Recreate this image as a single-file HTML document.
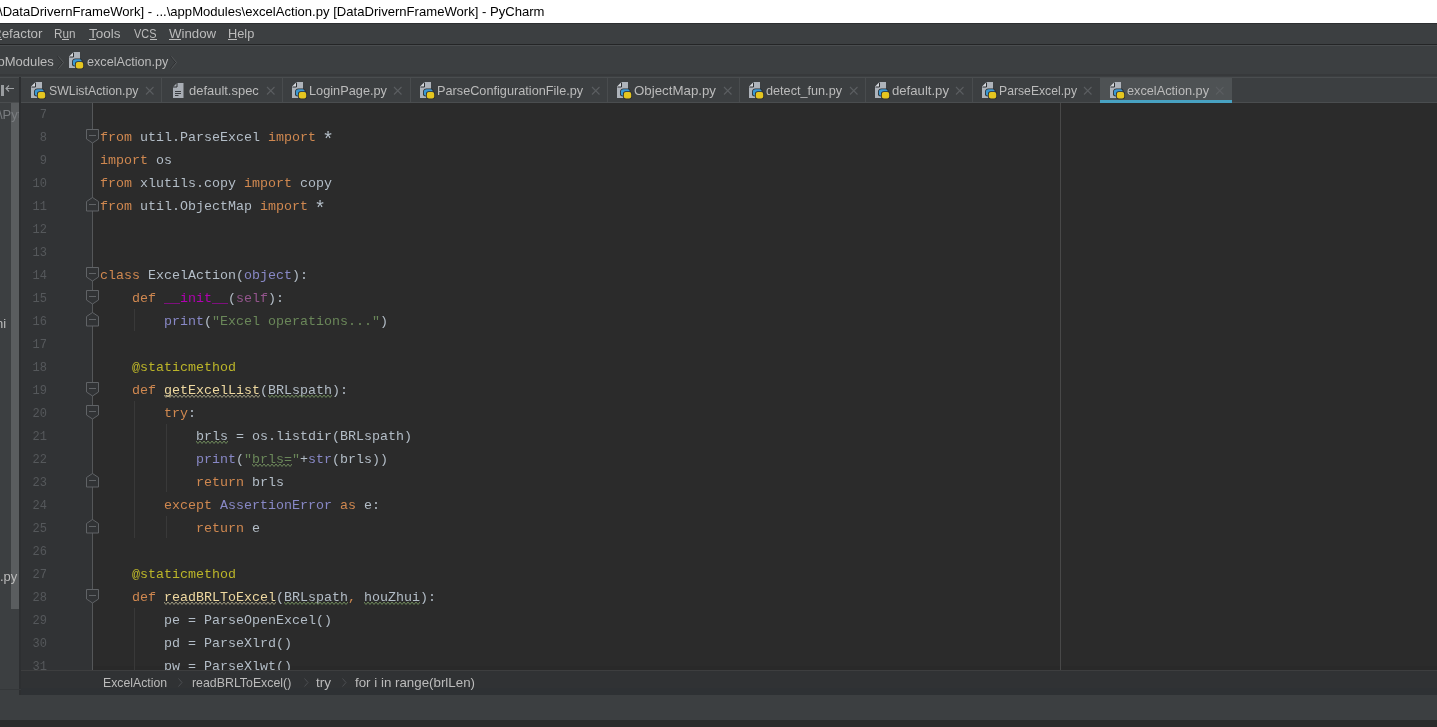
<!DOCTYPE html>
<html><head><meta charset="utf-8"><style>
*{margin:0;padding:0;box-sizing:border-box}
html,body{width:1437px;height:727px;overflow:hidden;background:#2b2b2b;font-family:"Liberation Sans",sans-serif}
.a{position:absolute}
.t{position:absolute;white-space:pre;font-size:13px;line-height:16px;transform-origin:0 0}
.c{position:absolute;white-space:pre;font-family:"Liberation Mono",monospace;font-size:13.333px;line-height:23px;color:#b3bdc7;left:100px}
.ln{position:absolute;white-space:pre;font-family:"Liberation Mono",monospace;font-size:13.333px;line-height:23px;color:#55585b;text-align:right;width:30px;left:16.5px;transform:scaleX(0.9);transform-origin:100% 0}
.k{color:#d08850}.s{color:#6a8759}.b{color:#8888c6}.m{color:#b200b2}.sf{color:#94558d}.d{color:#bbb529}.f{color:#efd9a0}
.ast{display:inline-block;width:8px;transform:translate(0,3px) scale(1.45)}
.w{text-decoration:underline wavy #5f8c4a;text-decoration-thickness:1px;text-underline-offset:3px}
.wy{text-decoration:underline wavy #8f8a3a;text-decoration-thickness:1px;text-underline-offset:3px}
</style></head><body><div style="position:absolute;left:0;top:0;width:1437px;height:727px;will-change:transform">
<div class="a" style="left:0px;top:0px;width:1437px;height:23px;background:#ffffff"></div>
<div class="a" style="left:0px;top:23px;width:1437px;height:21px;background:#3c3f41"></div>
<div class="a" style="left:0px;top:44px;width:1437px;height:1px;background:#242526"></div>
<div class="a" style="left:0px;top:23px;width:1437px;height:1px;background:#2d2f31"></div>
<div class="a" style="left:0px;top:45px;width:1437px;height:1px;background:#4a4d4f"></div>
<div class="a" style="left:0px;top:46px;width:1437px;height:31px;background:#3c3f41"></div>
<div class="a" style="left:0px;top:74px;width:1437px;height:2px;background:#37393b"></div>
<div class="a" style="left:0px;top:77px;width:1437px;height:25px;background:#3c3f41"></div>
<div class="a" style="left:0px;top:77px;width:1437px;height:1px;background:#4a4d4f"></div>
<div class="a" style="left:0px;top:102px;width:1437px;height:1px;background:#4a4d4f"></div>
<div class="a" style="left:0px;top:103px;width:19px;height:567px;background:#3c3f41"></div>
<div class="a" style="left:19px;top:77px;width:2px;height:618px;background:#2d2f31"></div>
<div class="a" style="left:21px;top:103px;width:72px;height:567px;background:#313335"></div>
<div class="a" style="left:92px;top:103px;width:1px;height:567px;background:#555759"></div>
<div class="a" style="left:0px;top:670px;width:19px;height:25px;background:#3c3f41"></div>
<div class="a" style="left:21px;top:670px;width:1416px;height:18px;background:#303234"></div>
<div class="a" style="left:21px;top:670px;width:1416px;height:1px;background:#3d3e3f"></div>
<div class="a" style="left:93px;top:666px;width:1344px;height:4px;background:#292929"></div>
<div class="a" style="left:1060px;top:103px;width:1px;height:567px;background:#484848"></div>
<div class="a" style="left:21px;top:688px;width:1416px;height:7px;background:#2e3134"></div>
<div class="a" style="left:0px;top:689px;width:21px;height:1px;background:#35383a"></div>
<div class="a" style="left:0px;top:695px;width:1437px;height:25px;background:#3c3f41"></div>
<div class="a" style="left:0px;top:720px;width:1437px;height:7px;background:#2b2b2b"></div>
<div class="a" style="left:1100px;top:78px;width:132px;height:22px;background:#4e5254"></div>
<div class="a" style="left:1100px;top:100px;width:132px;height:3px;background:#48a2c2"></div>
<div class="a" style="left:161px;top:78px;width:1px;height:24px;background:#494c4e"></div>
<div class="a" style="left:282px;top:78px;width:1px;height:24px;background:#494c4e"></div>
<div class="a" style="left:410px;top:78px;width:1px;height:24px;background:#494c4e"></div>
<div class="a" style="left:607px;top:78px;width:1px;height:24px;background:#494c4e"></div>
<div class="a" style="left:739px;top:78px;width:1px;height:24px;background:#494c4e"></div>
<div class="a" style="left:865px;top:78px;width:1px;height:24px;background:#494c4e"></div>
<div class="a" style="left:972px;top:78px;width:1px;height:24px;background:#494c4e"></div>
<div class="t" style="left:-1px;top:4.0px;color:#000000;transform:scaleX(1.0063)">\DataDrivernFrameWork] - ...\appModules\excelAction.py [DataDrivernFrameWork] - PyCharm</div>
<div class="t" style="left:-8.5px;top:25.700000000000003px;color:#bbbbbb;transform:scaleX(1.0279)">Refactor</div>
<div class="t" style="left:54px;top:25.700000000000003px;color:#bbbbbb;transform:scaleX(0.9015)">Run</div>
<div class="t" style="left:89px;top:25.700000000000003px;color:#bbbbbb;transform:scaleX(1.0380)">Tools</div>
<div class="t" style="left:134.3px;top:25.700000000000003px;color:#bbbbbb;transform:scaleX(0.8380)">VCS</div>
<div class="t" style="left:168.9px;top:25.700000000000003px;color:#bbbbbb;transform:scaleX(1.0208)">Window</div>
<div class="t" style="left:228.3px;top:25.700000000000003px;color:#bbbbbb;transform:scaleX(0.9837)">Help</div>
<div class="t" style="left:-17px;top:54.3px;color:#bbbbbb;transform:scaleX(0.9996)">appModules</div>
<div class="t" style="left:86.6px;top:54.3px;color:#bbbbbb;transform:scaleX(0.9711)">excelAction.py</div>
<div class="t" style="left:49px;top:83.0px;color:#bbbbbb;transform:scaleX(0.9457)">SWListAction.py</div>
<div class="t" style="left:189px;top:83.0px;color:#bbbbbb;transform:scaleX(0.9957)">default.spec</div>
<div class="t" style="left:309px;top:83.0px;color:#bbbbbb;transform:scaleX(0.9810)">LoginPage.py</div>
<div class="t" style="left:437.4px;top:83.0px;color:#bbbbbb;transform:scaleX(0.9774)">ParseConfigurationFile.py</div>
<div class="t" style="left:634px;top:83.0px;color:#bbbbbb;transform:scaleX(1.0224)">ObjectMap.py</div>
<div class="t" style="left:766px;top:83.0px;color:#bbbbbb;transform:scaleX(0.9736)">detect_fun.py</div>
<div class="t" style="left:892px;top:83.0px;color:#bbbbbb;transform:scaleX(1.0111)">default.py</div>
<div class="t" style="left:999px;top:83.0px;color:#bbbbbb;transform:scaleX(0.9387)">ParseExcel.py</div>
<div class="t" style="left:1127px;top:83.0px;color:#bbbbbb;transform:scaleX(0.9783)">excelAction.py</div>
<div class="t" style="left:102.5px;top:675.0px;color:#bbbbbb;transform:scaleX(0.9438)">ExcelAction</div>
<div class="t" style="left:191.7px;top:675.0px;color:#bbbbbb;transform:scaleX(0.9501)">readBRLToExcel()</div>
<div class="t" style="left:316px;top:675.0px;color:#bbbbbb;transform:scaleX(1.0387)">try</div>
<div class="t" style="left:355px;top:675.0px;color:#bbbbbb;transform:scaleX(1.0251)">for i in range(brlLen)</div>
<div class="a" style="left:0;top:103px;width:1437px;height:567px;overflow:hidden"><div class="a" style="left:0;top:-103px;width:1437px;height:727px"><div class="ln" style="top:102.94px">7</div>
<div class="ln" style="top:125.94px">8</div>
<div class="c" style="top:125.94px"><span class="k">from</span> util.ParseExcel <span class="k">import</span> <span class="ast">*</span></div>
<div class="ln" style="top:148.94px">9</div>
<div class="c" style="top:148.94px"><span class="k">import</span> os</div>
<div class="ln" style="top:171.94px">10</div>
<div class="c" style="top:171.94px"><span class="k">from</span> xlutils.copy <span class="k">import</span> copy</div>
<div class="ln" style="top:194.94px">11</div>
<div class="c" style="top:194.94px"><span class="k">from</span> util.ObjectMap <span class="k">import</span> <span class="ast">*</span></div>
<div class="ln" style="top:217.94px">12</div>
<div class="ln" style="top:240.94px">13</div>
<div class="ln" style="top:263.94px">14</div>
<div class="c" style="top:263.94px"><span class="k">class</span> ExcelAction(<span class="b">object</span>):</div>
<div class="ln" style="top:286.94px">15</div>
<div class="c" style="top:286.94px">    <span class="k">def</span> <span class="m">__init__</span>(<span class="sf">self</span>):</div>
<div class="ln" style="top:309.94px">16</div>
<div class="c" style="top:309.94px">        <span class="b">print</span>(<span class="s">"Excel operations..."</span>)</div>
<div class="ln" style="top:332.94px">17</div>
<div class="ln" style="top:355.94px">18</div>
<div class="c" style="top:355.94px">    <span class="d">@staticmethod</span></div>
<div class="ln" style="top:378.94px">19</div>
<div class="c" style="top:378.94px">    <span class="k">def</span> <span class="f">getExcelList</span>(BRLspath):</div>
<div class="ln" style="top:401.94px">20</div>
<div class="c" style="top:401.94px">        <span class="k">try</span>:</div>
<div class="ln" style="top:424.94px">21</div>
<div class="c" style="top:424.94px">            brls = os.listdir(BRLspath)</div>
<div class="ln" style="top:447.94px">22</div>
<div class="c" style="top:447.94px">            <span class="b">print</span>(<span class="s">"brls="</span>+<span class="b">str</span>(brls))</div>
<div class="ln" style="top:470.94px">23</div>
<div class="c" style="top:470.94px">            <span class="k">return</span> brls</div>
<div class="ln" style="top:493.94px">24</div>
<div class="c" style="top:493.94px">        <span class="k">except</span> <span class="b">AssertionError</span> <span class="k">as</span> e:</div>
<div class="ln" style="top:516.94px">25</div>
<div class="c" style="top:516.94px">            <span class="k">return</span> e</div>
<div class="ln" style="top:539.94px">26</div>
<div class="ln" style="top:562.94px">27</div>
<div class="c" style="top:562.94px">    <span class="d">@staticmethod</span></div>
<div class="ln" style="top:585.94px">28</div>
<div class="c" style="top:585.94px">    <span class="k">def</span> <span class="f">readBRLToExcel</span>(BRLspath<span class="k">,</span> houZhui):</div>
<div class="ln" style="top:608.94px">29</div>
<div class="c" style="top:608.94px">        pe = ParseOpenExcel()</div>
<div class="ln" style="top:631.94px">30</div>
<div class="c" style="top:631.94px">        pd = ParseXlrd()</div>
<div class="ln" style="top:654.94px">31</div>
<div class="c" style="top:654.94px">        pw = ParseXlwt()</div>
<svg class="a" style="left:164px;top:394px" width="96" height="5" viewBox="0 0 96 5"><polyline points="0,1 2,3.5 4,1 6,3.5 8,1 10,3.5 12,1 14,3.5 16,1 18,3.5 20,1 22,3.5 24,1 26,3.5 28,1 30,3.5 32,1 34,3.5 36,1 38,3.5 40,1 42,3.5 44,1 46,3.5 48,1 50,3.5 52,1 54,3.5 56,1 58,3.5 60,1 62,3.5 64,1 66,3.5 68,1 70,3.5 72,1 74,3.5 76,1 78,3.5 80,1 82,3.5 84,1 86,3.5 88,1 90,3.5 92,1 94,3.5 96,1" fill="none" stroke="#a09c80" stroke-width="1"/></svg>
<svg class="a" style="left:268px;top:394px" width="64" height="5" viewBox="0 0 64 5"><polyline points="0,1 2,3.5 4,1 6,3.5 8,1 10,3.5 12,1 14,3.5 16,1 18,3.5 20,1 22,3.5 24,1 26,3.5 28,1 30,3.5 32,1 34,3.5 36,1 38,3.5 40,1 42,3.5 44,1 46,3.5 48,1 50,3.5 52,1 54,3.5 56,1 58,3.5 60,1 62,3.5 64,1" fill="none" stroke="#6f8a5c" stroke-width="1"/></svg>
<svg class="a" style="left:196px;top:440px" width="32" height="5" viewBox="0 0 32 5"><polyline points="0,1 2,3.5 4,1 6,3.5 8,1 10,3.5 12,1 14,3.5 16,1 18,3.5 20,1 22,3.5 24,1 26,3.5 28,1 30,3.5 32,1" fill="none" stroke="#6f8a5c" stroke-width="1"/></svg>
<svg class="a" style="left:252px;top:463px" width="40" height="5" viewBox="0 0 40 5"><polyline points="0,1 2,3.5 4,1 6,3.5 8,1 10,3.5 12,1 14,3.5 16,1 18,3.5 20,1 22,3.5 24,1 26,3.5 28,1 30,3.5 32,1 34,3.5 36,1 38,3.5 40,1" fill="none" stroke="#6f8a5c" stroke-width="1"/></svg>
<svg class="a" style="left:164px;top:601px" width="112" height="5" viewBox="0 0 112 5"><polyline points="0,1 2,3.5 4,1 6,3.5 8,1 10,3.5 12,1 14,3.5 16,1 18,3.5 20,1 22,3.5 24,1 26,3.5 28,1 30,3.5 32,1 34,3.5 36,1 38,3.5 40,1 42,3.5 44,1 46,3.5 48,1 50,3.5 52,1 54,3.5 56,1 58,3.5 60,1 62,3.5 64,1 66,3.5 68,1 70,3.5 72,1 74,3.5 76,1 78,3.5 80,1 82,3.5 84,1 86,3.5 88,1 90,3.5 92,1 94,3.5 96,1 98,3.5 100,1 102,3.5 104,1 106,3.5 108,1 110,3.5 112,1" fill="none" stroke="#a09c80" stroke-width="1"/></svg>
<svg class="a" style="left:284px;top:601px" width="64" height="5" viewBox="0 0 64 5"><polyline points="0,1 2,3.5 4,1 6,3.5 8,1 10,3.5 12,1 14,3.5 16,1 18,3.5 20,1 22,3.5 24,1 26,3.5 28,1 30,3.5 32,1 34,3.5 36,1 38,3.5 40,1 42,3.5 44,1 46,3.5 48,1 50,3.5 52,1 54,3.5 56,1 58,3.5 60,1 62,3.5 64,1" fill="none" stroke="#6f8a5c" stroke-width="1"/></svg>
<svg class="a" style="left:364px;top:601px" width="56" height="5" viewBox="0 0 56 5"><polyline points="0,1 2,3.5 4,1 6,3.5 8,1 10,3.5 12,1 14,3.5 16,1 18,3.5 20,1 22,3.5 24,1 26,3.5 28,1 30,3.5 32,1 34,3.5 36,1 38,3.5 40,1 42,3.5 44,1 46,3.5 48,1 50,3.5 52,1 54,3.5 56,1" fill="none" stroke="#6f8a5c" stroke-width="1"/></svg></div></div>
<svg class="a" style="left:31px;top:82px" width="16" height="18" viewBox="0 0 16 18"><path d="M0 4.5 L4.5 0 H11 V16 H0 Z" fill="#aeb3ba"/><path d="M0 5 L4.5 0.5 V5 Z" fill="#d5d8dc"/><path d="M0.5 5 H4.5 V0.5" fill="none" stroke="#2c2e30" stroke-width="1"/><path d="M3 10 Q3 6.5 6.5 6.5 H11 Q13.5 6.5 13.5 9 V11.5 Q13.5 14.5 10.5 14.5 H6 Q3 14.5 3 12 Z" fill="#2b2d2f"/><path d="M3.8 10 Q3.8 7.3 6.5 7.3 H10.5 Q12.7 7.3 12.7 9.3 V11 Q12.7 13.7 10 13.7 H6 Q3.8 13.7 3.8 11.5 Z" fill="#3c98d2"/><path d="M6 12 Q6 9.2 8.8 9.2 H12.5 Q15 9.2 15 11.7 V14.5 Q15 17.2 12.3 17.2 H8.8 Q6 17.2 6 14.5 Z" fill="#2b2d2f"/><path d="M6.8 12 Q6.8 10 8.8 10 H12.3 Q14.2 10 14.2 11.9 V14.4 Q14.2 16.4 12.2 16.4 H9 Q6.8 16.4 6.8 14.4 Z" fill="#e5c620"/></svg><svg class="a" style="left:292px;top:82px" width="16" height="18" viewBox="0 0 16 18"><path d="M0 4.5 L4.5 0 H11 V16 H0 Z" fill="#aeb3ba"/><path d="M0 5 L4.5 0.5 V5 Z" fill="#d5d8dc"/><path d="M0.5 5 H4.5 V0.5" fill="none" stroke="#2c2e30" stroke-width="1"/><path d="M3 10 Q3 6.5 6.5 6.5 H11 Q13.5 6.5 13.5 9 V11.5 Q13.5 14.5 10.5 14.5 H6 Q3 14.5 3 12 Z" fill="#2b2d2f"/><path d="M3.8 10 Q3.8 7.3 6.5 7.3 H10.5 Q12.7 7.3 12.7 9.3 V11 Q12.7 13.7 10 13.7 H6 Q3.8 13.7 3.8 11.5 Z" fill="#3c98d2"/><path d="M6 12 Q6 9.2 8.8 9.2 H12.5 Q15 9.2 15 11.7 V14.5 Q15 17.2 12.3 17.2 H8.8 Q6 17.2 6 14.5 Z" fill="#2b2d2f"/><path d="M6.8 12 Q6.8 10 8.8 10 H12.3 Q14.2 10 14.2 11.9 V14.4 Q14.2 16.4 12.2 16.4 H9 Q6.8 16.4 6.8 14.4 Z" fill="#e5c620"/></svg><svg class="a" style="left:420px;top:82px" width="16" height="18" viewBox="0 0 16 18"><path d="M0 4.5 L4.5 0 H11 V16 H0 Z" fill="#aeb3ba"/><path d="M0 5 L4.5 0.5 V5 Z" fill="#d5d8dc"/><path d="M0.5 5 H4.5 V0.5" fill="none" stroke="#2c2e30" stroke-width="1"/><path d="M3 10 Q3 6.5 6.5 6.5 H11 Q13.5 6.5 13.5 9 V11.5 Q13.5 14.5 10.5 14.5 H6 Q3 14.5 3 12 Z" fill="#2b2d2f"/><path d="M3.8 10 Q3.8 7.3 6.5 7.3 H10.5 Q12.7 7.3 12.7 9.3 V11 Q12.7 13.7 10 13.7 H6 Q3.8 13.7 3.8 11.5 Z" fill="#3c98d2"/><path d="M6 12 Q6 9.2 8.8 9.2 H12.5 Q15 9.2 15 11.7 V14.5 Q15 17.2 12.3 17.2 H8.8 Q6 17.2 6 14.5 Z" fill="#2b2d2f"/><path d="M6.8 12 Q6.8 10 8.8 10 H12.3 Q14.2 10 14.2 11.9 V14.4 Q14.2 16.4 12.2 16.4 H9 Q6.8 16.4 6.8 14.4 Z" fill="#e5c620"/></svg><svg class="a" style="left:617px;top:82px" width="16" height="18" viewBox="0 0 16 18"><path d="M0 4.5 L4.5 0 H11 V16 H0 Z" fill="#aeb3ba"/><path d="M0 5 L4.5 0.5 V5 Z" fill="#d5d8dc"/><path d="M0.5 5 H4.5 V0.5" fill="none" stroke="#2c2e30" stroke-width="1"/><path d="M3 10 Q3 6.5 6.5 6.5 H11 Q13.5 6.5 13.5 9 V11.5 Q13.5 14.5 10.5 14.5 H6 Q3 14.5 3 12 Z" fill="#2b2d2f"/><path d="M3.8 10 Q3.8 7.3 6.5 7.3 H10.5 Q12.7 7.3 12.7 9.3 V11 Q12.7 13.7 10 13.7 H6 Q3.8 13.7 3.8 11.5 Z" fill="#3c98d2"/><path d="M6 12 Q6 9.2 8.8 9.2 H12.5 Q15 9.2 15 11.7 V14.5 Q15 17.2 12.3 17.2 H8.8 Q6 17.2 6 14.5 Z" fill="#2b2d2f"/><path d="M6.8 12 Q6.8 10 8.8 10 H12.3 Q14.2 10 14.2 11.9 V14.4 Q14.2 16.4 12.2 16.4 H9 Q6.8 16.4 6.8 14.4 Z" fill="#e5c620"/></svg><svg class="a" style="left:749px;top:82px" width="16" height="18" viewBox="0 0 16 18"><path d="M0 4.5 L4.5 0 H11 V16 H0 Z" fill="#aeb3ba"/><path d="M0 5 L4.5 0.5 V5 Z" fill="#d5d8dc"/><path d="M0.5 5 H4.5 V0.5" fill="none" stroke="#2c2e30" stroke-width="1"/><path d="M3 10 Q3 6.5 6.5 6.5 H11 Q13.5 6.5 13.5 9 V11.5 Q13.5 14.5 10.5 14.5 H6 Q3 14.5 3 12 Z" fill="#2b2d2f"/><path d="M3.8 10 Q3.8 7.3 6.5 7.3 H10.5 Q12.7 7.3 12.7 9.3 V11 Q12.7 13.7 10 13.7 H6 Q3.8 13.7 3.8 11.5 Z" fill="#3c98d2"/><path d="M6 12 Q6 9.2 8.8 9.2 H12.5 Q15 9.2 15 11.7 V14.5 Q15 17.2 12.3 17.2 H8.8 Q6 17.2 6 14.5 Z" fill="#2b2d2f"/><path d="M6.8 12 Q6.8 10 8.8 10 H12.3 Q14.2 10 14.2 11.9 V14.4 Q14.2 16.4 12.2 16.4 H9 Q6.8 16.4 6.8 14.4 Z" fill="#e5c620"/></svg><svg class="a" style="left:875px;top:82px" width="16" height="18" viewBox="0 0 16 18"><path d="M0 4.5 L4.5 0 H11 V16 H0 Z" fill="#aeb3ba"/><path d="M0 5 L4.5 0.5 V5 Z" fill="#d5d8dc"/><path d="M0.5 5 H4.5 V0.5" fill="none" stroke="#2c2e30" stroke-width="1"/><path d="M3 10 Q3 6.5 6.5 6.5 H11 Q13.5 6.5 13.5 9 V11.5 Q13.5 14.5 10.5 14.5 H6 Q3 14.5 3 12 Z" fill="#2b2d2f"/><path d="M3.8 10 Q3.8 7.3 6.5 7.3 H10.5 Q12.7 7.3 12.7 9.3 V11 Q12.7 13.7 10 13.7 H6 Q3.8 13.7 3.8 11.5 Z" fill="#3c98d2"/><path d="M6 12 Q6 9.2 8.8 9.2 H12.5 Q15 9.2 15 11.7 V14.5 Q15 17.2 12.3 17.2 H8.8 Q6 17.2 6 14.5 Z" fill="#2b2d2f"/><path d="M6.8 12 Q6.8 10 8.8 10 H12.3 Q14.2 10 14.2 11.9 V14.4 Q14.2 16.4 12.2 16.4 H9 Q6.8 16.4 6.8 14.4 Z" fill="#e5c620"/></svg><svg class="a" style="left:982px;top:82px" width="16" height="18" viewBox="0 0 16 18"><path d="M0 4.5 L4.5 0 H11 V16 H0 Z" fill="#aeb3ba"/><path d="M0 5 L4.5 0.5 V5 Z" fill="#d5d8dc"/><path d="M0.5 5 H4.5 V0.5" fill="none" stroke="#2c2e30" stroke-width="1"/><path d="M3 10 Q3 6.5 6.5 6.5 H11 Q13.5 6.5 13.5 9 V11.5 Q13.5 14.5 10.5 14.5 H6 Q3 14.5 3 12 Z" fill="#2b2d2f"/><path d="M3.8 10 Q3.8 7.3 6.5 7.3 H10.5 Q12.7 7.3 12.7 9.3 V11 Q12.7 13.7 10 13.7 H6 Q3.8 13.7 3.8 11.5 Z" fill="#3c98d2"/><path d="M6 12 Q6 9.2 8.8 9.2 H12.5 Q15 9.2 15 11.7 V14.5 Q15 17.2 12.3 17.2 H8.8 Q6 17.2 6 14.5 Z" fill="#2b2d2f"/><path d="M6.8 12 Q6.8 10 8.8 10 H12.3 Q14.2 10 14.2 11.9 V14.4 Q14.2 16.4 12.2 16.4 H9 Q6.8 16.4 6.8 14.4 Z" fill="#e5c620"/></svg><svg class="a" style="left:1110px;top:82px" width="16" height="18" viewBox="0 0 16 18"><path d="M0 4.5 L4.5 0 H11 V16 H0 Z" fill="#aeb3ba"/><path d="M0 5 L4.5 0.5 V5 Z" fill="#d5d8dc"/><path d="M0.5 5 H4.5 V0.5" fill="none" stroke="#2c2e30" stroke-width="1"/><path d="M3 10 Q3 6.5 6.5 6.5 H11 Q13.5 6.5 13.5 9 V11.5 Q13.5 14.5 10.5 14.5 H6 Q3 14.5 3 12 Z" fill="#2b2d2f"/><path d="M3.8 10 Q3.8 7.3 6.5 7.3 H10.5 Q12.7 7.3 12.7 9.3 V11 Q12.7 13.7 10 13.7 H6 Q3.8 13.7 3.8 11.5 Z" fill="#3c98d2"/><path d="M6 12 Q6 9.2 8.8 9.2 H12.5 Q15 9.2 15 11.7 V14.5 Q15 17.2 12.3 17.2 H8.8 Q6 17.2 6 14.5 Z" fill="#2b2d2f"/><path d="M6.8 12 Q6.8 10 8.8 10 H12.3 Q14.2 10 14.2 11.9 V14.4 Q14.2 16.4 12.2 16.4 H9 Q6.8 16.4 6.8 14.4 Z" fill="#e5c620"/></svg><svg class="a" style="left:173px;top:83px" width="12" height="16" viewBox="0 0 12 16"><path d="M0 4 L4 0 H10.5 V15 H0 Z" fill="#a8adb4"/><path d="M0 4 H4 V0" fill="none" stroke="#2f3133" stroke-width="1"/><path d="M2 8.5 H8 M2 10.5 H8 M2 12.5 H5.5" stroke="#3a3d40" stroke-width="1"/></svg><svg class="a" style="left:145px;top:86px" width="10" height="10" viewBox="0 0 10 10"><path d="M1 1 L8.5 8.5 M8.5 1 L1 8.5" stroke="#5b5e61" stroke-width="1.1"/></svg><svg class="a" style="left:266px;top:86px" width="10" height="10" viewBox="0 0 10 10"><path d="M1 1 L8.5 8.5 M8.5 1 L1 8.5" stroke="#5b5e61" stroke-width="1.1"/></svg><svg class="a" style="left:393px;top:86px" width="10" height="10" viewBox="0 0 10 10"><path d="M1 1 L8.5 8.5 M8.5 1 L1 8.5" stroke="#5b5e61" stroke-width="1.1"/></svg><svg class="a" style="left:591px;top:86px" width="10" height="10" viewBox="0 0 10 10"><path d="M1 1 L8.5 8.5 M8.5 1 L1 8.5" stroke="#5b5e61" stroke-width="1.1"/></svg><svg class="a" style="left:723px;top:86px" width="10" height="10" viewBox="0 0 10 10"><path d="M1 1 L8.5 8.5 M8.5 1 L1 8.5" stroke="#5b5e61" stroke-width="1.1"/></svg><svg class="a" style="left:849px;top:86px" width="10" height="10" viewBox="0 0 10 10"><path d="M1 1 L8.5 8.5 M8.5 1 L1 8.5" stroke="#5b5e61" stroke-width="1.1"/></svg><svg class="a" style="left:955px;top:86px" width="10" height="10" viewBox="0 0 10 10"><path d="M1 1 L8.5 8.5 M8.5 1 L1 8.5" stroke="#5b5e61" stroke-width="1.1"/></svg><svg class="a" style="left:1083px;top:86px" width="10" height="10" viewBox="0 0 10 10"><path d="M1 1 L8.5 8.5 M8.5 1 L1 8.5" stroke="#5b5e61" stroke-width="1.1"/></svg><svg class="a" style="left:1215px;top:86px" width="10" height="10" viewBox="0 0 10 10"><path d="M1 1 L8.5 8.5 M8.5 1 L1 8.5" stroke="#5b5e61" stroke-width="1.1"/></svg><svg class="a" style="left:69px;top:52px" width="16" height="18" viewBox="0 0 16 18"><path d="M0 4.5 L4.5 0 H11 V16 H0 Z" fill="#aeb3ba"/><path d="M0 5 L4.5 0.5 V5 Z" fill="#d5d8dc"/><path d="M0.5 5 H4.5 V0.5" fill="none" stroke="#2c2e30" stroke-width="1"/><path d="M3 10 Q3 6.5 6.5 6.5 H11 Q13.5 6.5 13.5 9 V11.5 Q13.5 14.5 10.5 14.5 H6 Q3 14.5 3 12 Z" fill="#2b2d2f"/><path d="M3.8 10 Q3.8 7.3 6.5 7.3 H10.5 Q12.7 7.3 12.7 9.3 V11 Q12.7 13.7 10 13.7 H6 Q3.8 13.7 3.8 11.5 Z" fill="#3c98d2"/><path d="M6 12 Q6 9.2 8.8 9.2 H12.5 Q15 9.2 15 11.7 V14.5 Q15 17.2 12.3 17.2 H8.8 Q6 17.2 6 14.5 Z" fill="#2b2d2f"/><path d="M6.8 12 Q6.8 10 8.8 10 H12.3 Q14.2 10 14.2 11.9 V14.4 Q14.2 16.4 12.2 16.4 H9 Q6.8 16.4 6.8 14.4 Z" fill="#e5c620"/></svg><svg class="a" style="left:56.5px;top:56px" width="8" height="13" viewBox="0 0 8 13"><path d="M0.5 0.5 L5.5 6.5 L0.5 12.5" stroke="#2c2e30" fill="none" stroke-width="1"/><path d="M1.5 0.5 L6.5 6.5 L1.5 12.5" stroke="#55585a" fill="none" stroke-width="1"/></svg><svg class="a" style="left:170px;top:56px" width="8" height="13" viewBox="0 0 8 13"><path d="M0.5 0.5 L5.5 6.5 L0.5 12.5" stroke="#2c2e30" fill="none" stroke-width="1"/><path d="M1.5 0.5 L6.5 6.5 L1.5 12.5" stroke="#55585a" fill="none" stroke-width="1"/></svg><svg class="a" style="left:178px;top:678px" width="5" height="9" viewBox="0 0 5 9"><path d="M0.5 0.5 L4 4.5 L0.5 8.5" stroke="#4b4e51" fill="none"/></svg><svg class="a" style="left:304px;top:678px" width="5" height="9" viewBox="0 0 5 9"><path d="M0.5 0.5 L4 4.5 L0.5 8.5" stroke="#4b4e51" fill="none"/></svg><svg class="a" style="left:342px;top:678px" width="5" height="9" viewBox="0 0 5 9"><path d="M0.5 0.5 L4 4.5 L0.5 8.5" stroke="#4b4e51" fill="none"/></svg><div class="a" style="left:1px;top:85px;width:3px;height:11px;background:#9a9da0"></div><svg class="a" style="left:5px;top:85px" width="10" height="8" viewBox="0 0 10 8"><path d="M9 3.5 H1 M4 0.5 L1 3.5 L4 6.5" stroke="#a0a3a6" fill="none" stroke-width="1.1"/></svg><svg class="a" style="left:85px;top:128px" width="15" height="17" viewBox="0 0 15 17"><path d="M1.5 1.5 H13.5 V11 L7.5 15 L1.5 11 Z" fill="#313335" stroke="#606366" stroke-width="1"/><path d="M4 7.5 H11" stroke="#606366"/></svg><svg class="a" style="left:85px;top:266px" width="15" height="17" viewBox="0 0 15 17"><path d="M1.5 1.5 H13.5 V11 L7.5 15 L1.5 11 Z" fill="#313335" stroke="#606366" stroke-width="1"/><path d="M4 7.5 H11" stroke="#606366"/></svg><svg class="a" style="left:85px;top:289px" width="15" height="17" viewBox="0 0 15 17"><path d="M1.5 1.5 H13.5 V11 L7.5 15 L1.5 11 Z" fill="#313335" stroke="#606366" stroke-width="1"/><path d="M4 7.5 H11" stroke="#606366"/></svg><svg class="a" style="left:85px;top:381px" width="15" height="17" viewBox="0 0 15 17"><path d="M1.5 1.5 H13.5 V11 L7.5 15 L1.5 11 Z" fill="#313335" stroke="#606366" stroke-width="1"/><path d="M4 7.5 H11" stroke="#606366"/></svg><svg class="a" style="left:85px;top:404px" width="15" height="17" viewBox="0 0 15 17"><path d="M1.5 1.5 H13.5 V11 L7.5 15 L1.5 11 Z" fill="#313335" stroke="#606366" stroke-width="1"/><path d="M4 7.5 H11" stroke="#606366"/></svg><svg class="a" style="left:85px;top:588px" width="15" height="17" viewBox="0 0 15 17"><path d="M1.5 1.5 H13.5 V11 L7.5 15 L1.5 11 Z" fill="#313335" stroke="#606366" stroke-width="1"/><path d="M4 7.5 H11" stroke="#606366"/></svg><svg class="a" style="left:85px;top:196px" width="15" height="17" viewBox="0 0 15 17"><path d="M1.5 15 H13.5 V5.5 L7.5 1.5 L1.5 5.5 Z" fill="#313335" stroke="#606366" stroke-width="1"/><path d="M4 8.5 H11" stroke="#606366"/></svg><svg class="a" style="left:85px;top:311px" width="15" height="17" viewBox="0 0 15 17"><path d="M1.5 15 H13.5 V5.5 L7.5 1.5 L1.5 5.5 Z" fill="#313335" stroke="#606366" stroke-width="1"/><path d="M4 8.5 H11" stroke="#606366"/></svg><svg class="a" style="left:85px;top:472px" width="15" height="17" viewBox="0 0 15 17"><path d="M1.5 15 H13.5 V5.5 L7.5 1.5 L1.5 5.5 Z" fill="#313335" stroke="#606366" stroke-width="1"/><path d="M4 8.5 H11" stroke="#606366"/></svg><svg class="a" style="left:85px;top:518px" width="15" height="17" viewBox="0 0 15 17"><path d="M1.5 15 H13.5 V5.5 L7.5 1.5 L1.5 5.5 Z" fill="#313335" stroke="#606366" stroke-width="1"/><path d="M4 8.5 H11" stroke="#606366"/></svg><div class="a" style="left:134px;top:309px;width:1px;height:22px;background:#393939"></div><div class="a" style="left:134px;top:401px;width:1px;height:137px;background:#393939"></div><div class="a" style="left:166px;top:424px;width:1px;height:68px;background:#393939"></div><div class="a" style="left:166px;top:516px;width:1px;height:22px;background:#393939"></div><div class="a" style="left:134px;top:608px;width:1px;height:62px;background:#393939"></div><div class="a" style="left:11px;top:103px;width:8px;height:506px;background:#5a5d5f"></div><div class="a" style="left:0px;top:39px;width:2px;height:1px;background:#bbbbbb"></div><div class="a" style="left:62.4px;top:39px;width:6.800000000000004px;height:1px;background:#bbbbbb"></div><div class="a" style="left:89.2px;top:39px;width:6.799999999999997px;height:1px;background:#bbbbbb"></div><div class="a" style="left:149.9px;top:39px;width:6.799999999999983px;height:1px;background:#bbbbbb"></div><div class="a" style="left:168.9px;top:39px;width:12.099999999999994px;height:1px;background:#bbbbbb"></div><div class="a" style="left:228.3px;top:39px;width:8.799999999999983px;height:1px;background:#bbbbbb"></div><div class="a" style="left:0;top:103px;width:19px;height:567px;overflow:hidden"><div class="t" style="left:-1px;top:4px;color:#7a7d80;font-size:13px">\Pyt</div><div class="t" style="left:-4px;top:213px;color:#bbbbbb;font-size:13px">ni</div><div class="t" style="left:0px;top:466px;color:#bbbbbb;font-size:13px">.py</div></div>
</div></body></html>
